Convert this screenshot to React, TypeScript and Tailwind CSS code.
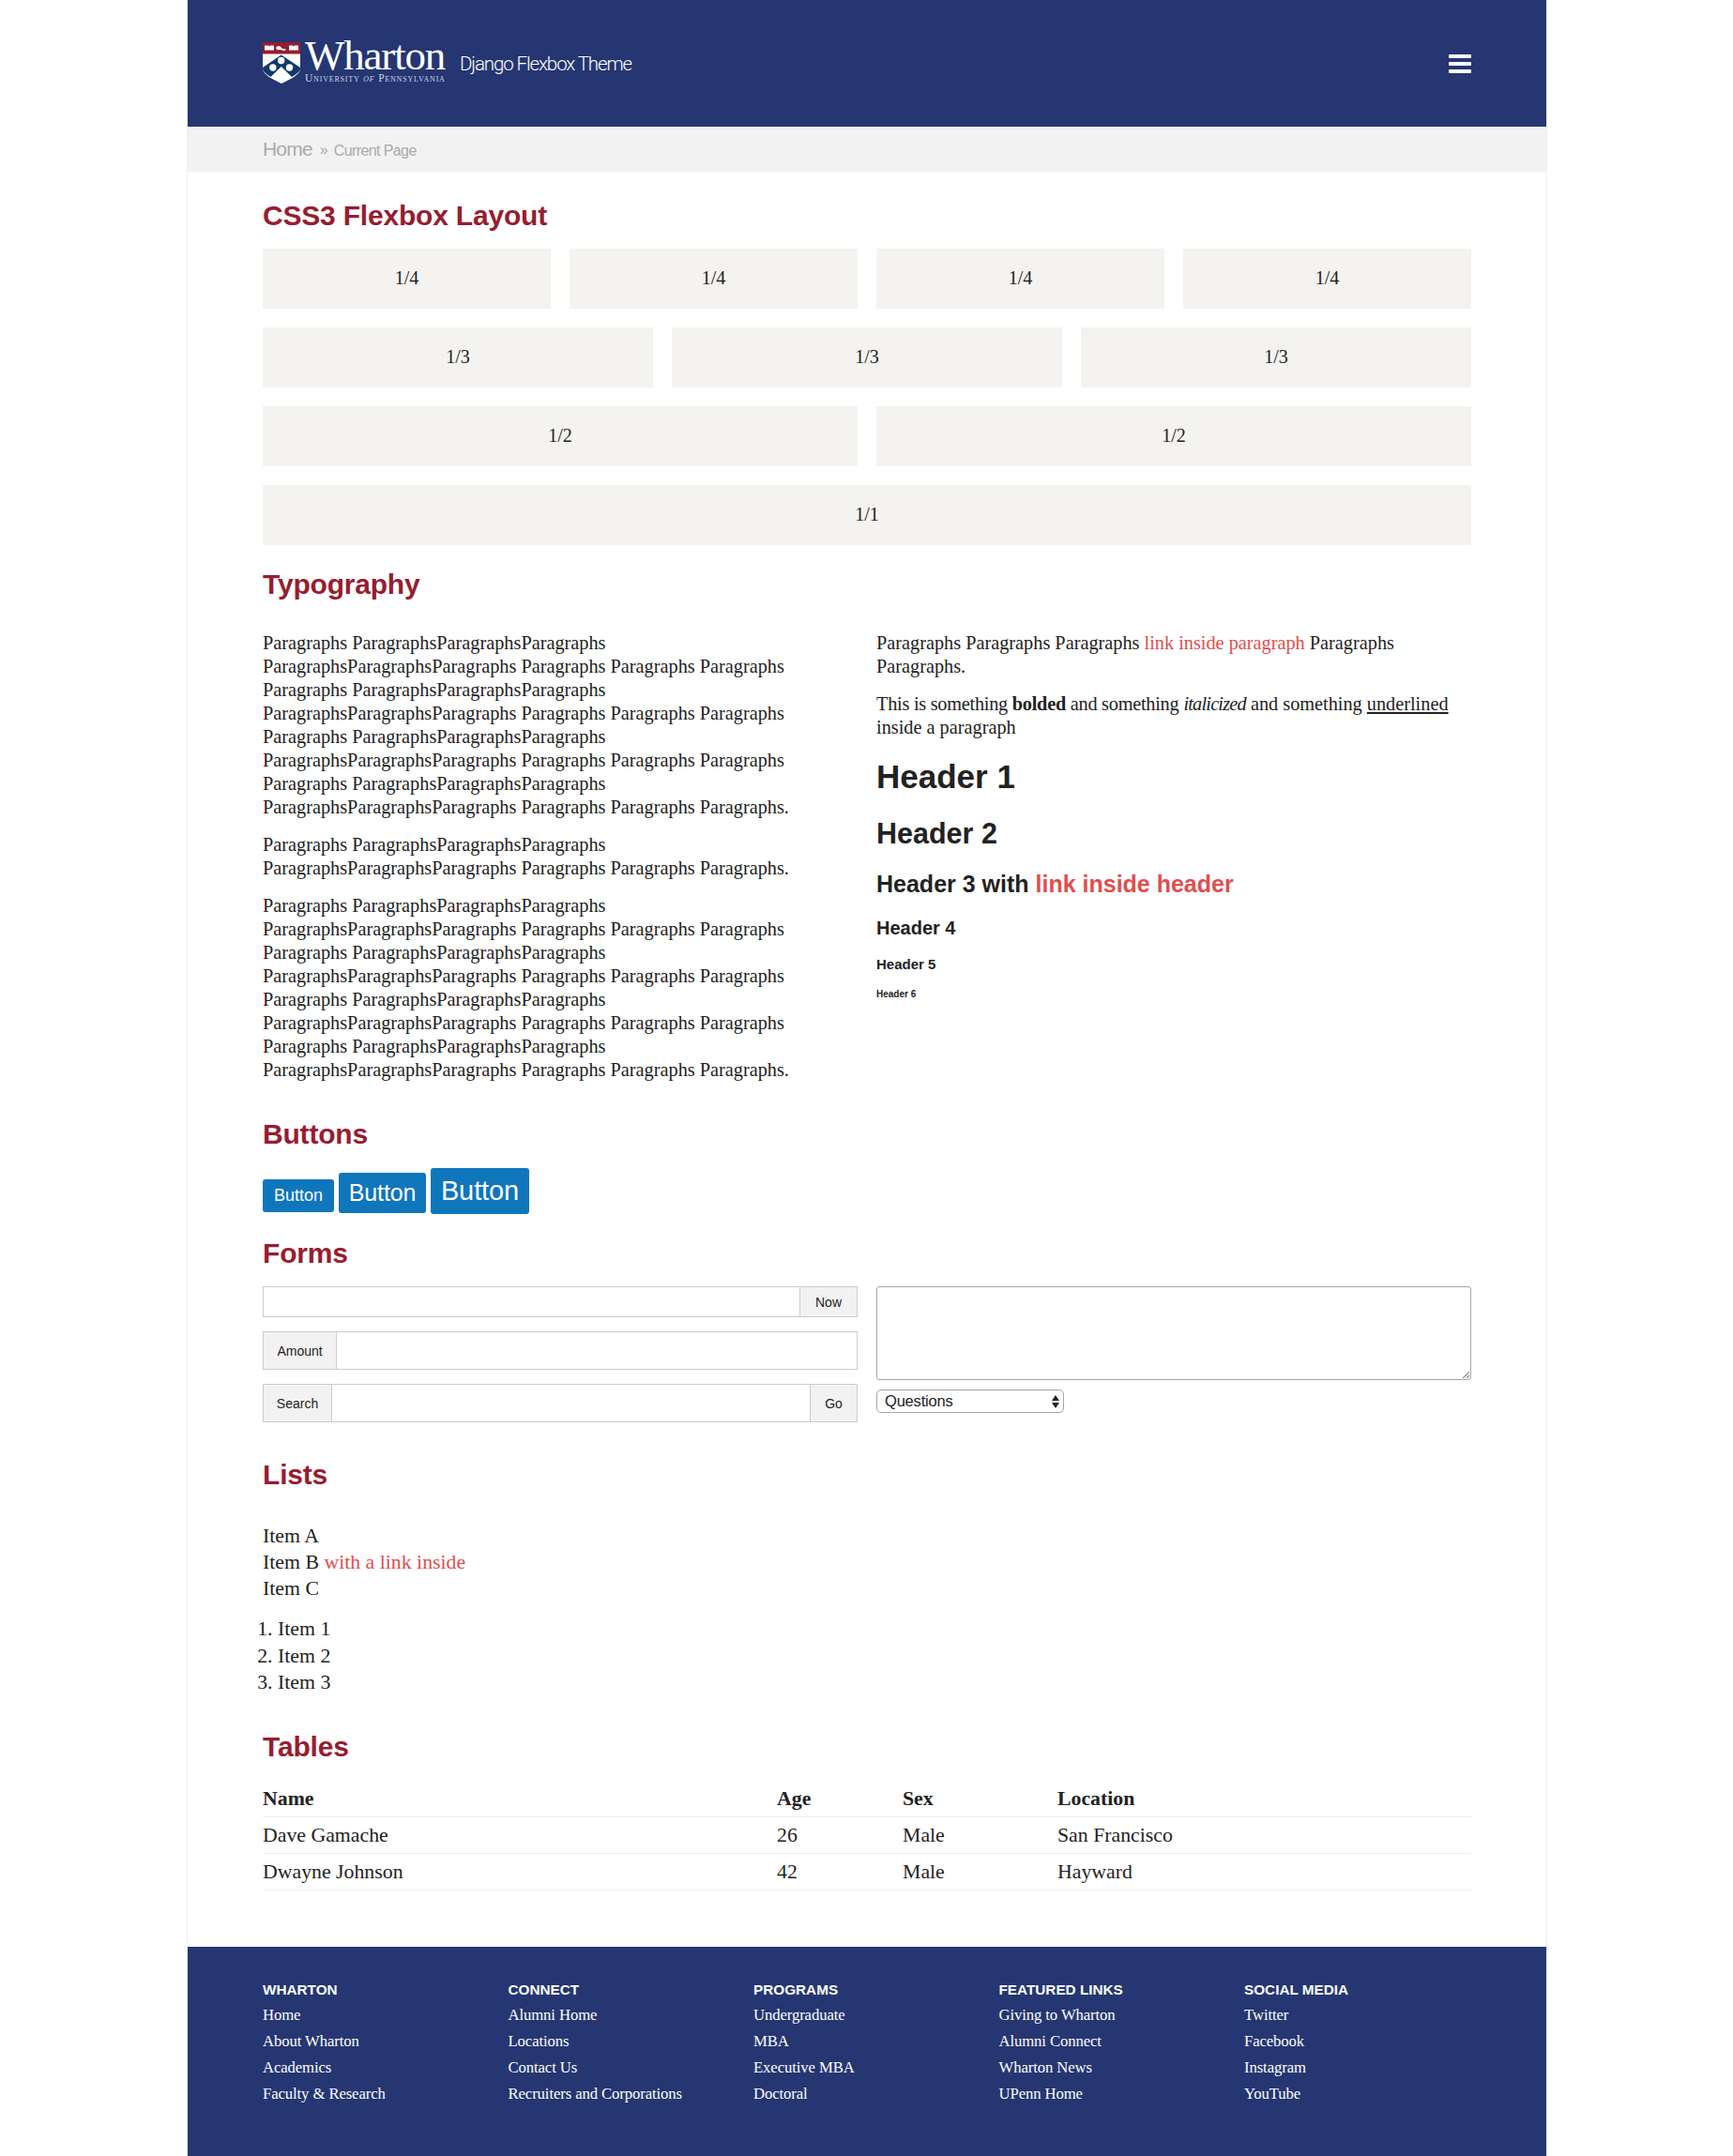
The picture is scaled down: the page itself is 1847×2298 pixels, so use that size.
const serif = "font-['Liberation_Serif',serif]";

function Shield() {
  return (
    <svg width="40" height="44" viewBox="0 0 40 44" className="shrink-0 mt-[-2px]">
      <path d="M0 0H40V28C40 35 28 40 20 44C12 40 0 35 0 28Z" fill="#fff" />
      <rect x="0" y="0" width="40" height="12.500" fill="#961d31" />
      <path d="M2 3.500h4l1 1 1-1h4v5H2Z M28 3.500h4l1 1 1-1h4v5H28Z M14 6c2-3 5-2 6 0s3 0 5 2c-3 2-4 0-6 0s-4 1-5-2Z" fill="#fff" />
      <path d="M19.700 13.500L40 27V28C40 30 38 33 31 37L19.700 26L8.500 37C2 33 0 30 0 28V27Z" fill="#0f3a6b" />
      <circle cx="19.700" cy="19.500" r="3.700" fill="#fff" />
      <circle cx="10.800" cy="27" r="3.700" fill="#fff" />
      <circle cx="28.500" cy="27" r="3.700" fill="#fff" />
    </svg>
  );
}

function Box({ label, className }: { label: string; className: string }) {
  return (
    <div className={`${className} h-16 pb-[3px] bg-[#f4f3ef] flex items-center justify-center text-[20px] text-[#222]`}>
      {label}
    </div>
  );
}

function H2({ children, className = "" }: { children: React.ReactNode; className?: string }) {
  return (
    <h2 className={`font-['Liberation_Sans',sans-serif] font-bold text-[30px] leading-[36px] tracking-[-0.2px] text-[#961d31] ${className}`}>
      {children}
    </h2>
  );
}

const P1 = "Paragraphs ParagraphsParagraphsParagraphs";
const P2 = "ParagraphsParagraphsParagraphs Paragraphs Paragraphs Paragraphs";

function LongPara({ className = "" }: { className?: string }) {
  return (
    <p className={className}>
      {P1}<br />{P2}<br />{P1}<br />{P2}<br />{P1}<br />{P2}<br />{P1}<br />{P2}.
    </p>
  );
}

const footer = [
  { t: "WHARTON", l: ["Home", "About Wharton", "Academics", "Faculty & Research"] },
  { t: "CONNECT", l: ["Alumni Home", "Locations", "Contact Us", "Recruiters and Corporations"] },
  { t: "PROGRAMS", l: ["Undergraduate", "MBA", "Executive MBA", "Doctoral"] },
  { t: "FEATURED LINKS", l: ["Giving to Wharton", "Alumni Connect", "Wharton News", "UPenn Home"] },
  { t: "SOCIAL MEDIA", l: ["Twitter", "Facebook", "Instagram", "YouTube"] },
];

export default function App() {
  return (
    <div className={`${serif} ml-[199px] w-[1450px] h-[2298px] border-x border-[#eeeeee] bg-white text-[#222] flex flex-col`}>
      <header className="h-[135px] bg-[#253672] px-20 flex items-center justify-between text-white">
        <div className="flex items-center">
          <Shield />
          <div className="ml-[5px] flex flex-col w-[152px] mt-[-1px]">
            <span className="font-['Liberation_Serif',serif] text-[45px] leading-[36px] tracking-[-1.2px] mt-[-4px]">Wharton</span>
            <span className="font-['Liberation_Serif',serif] text-[11.500px] leading-[12px] tracking-[0.8px] text-[#cfd4e4] whitespace-nowrap [font-variant:small-caps]">
              University <i>of</i> Pennsylvania
            </span>
          </div>
          <span className="ml-[13px] mt-[2px] font-['Roboto',sans-serif] font-light text-[20.500px] tracking-[-1.100px]">Django Flexbox Theme</span>
        </div>
        <div className="flex flex-col gap-[4px] w-6">
          <span className="h-1 bg-white rounded-[1px]" />
          <span className="h-1 bg-white rounded-[1px]" />
          <span className="h-1 bg-white rounded-[1px]" />
        </div>
      </header>

      <nav className="h-12 bg-[#f2f2f2] px-20 flex items-center font-['Liberation_Sans',sans-serif] text-[#aaaaaa]">
        <span className="text-[21px] tracking-[-0.8px]">Home</span>
        <span className="ml-[8px] text-[16px] mt-[2px]">»</span>
        <span className="ml-[6px] text-[16px] mt-[3px] tracking-[-0.6px]">Current Page</span>
      </nav>

      <main className="px-20 flex-1">
        <H2 className="mt-[29px]">CSS3 Flexbox Layout</H2>
        <div className="mt-[17px] flex flex-col gap-5">
          <div className="flex gap-5">
            {[0, 1, 2, 3].map((i) => <Box key={i} label="1/4" className="flex-1" />)}
          </div>
          <div className="flex gap-5">
            {[0, 1, 2].map((i) => <Box key={i} label="1/3" className="flex-1" />)}
          </div>
          <div className="flex gap-5">
            {[0, 1].map((i) => <Box key={i} label="1/2" className="flex-1" />)}
          </div>
          <Box label="1/1" className="w-full" />
        </div>

        <H2 className="mt-6">Typography</H2>
        <div className="mt-[32px] grid grid-cols-2 gap-5 text-[20.300px] leading-[25px] text-[#222]">
          <div className="whitespace-nowrap">
            <LongPara />
            <p className="mt-[15px]">{P1}<br />{P2}.</p>
            <LongPara className="mt-[15px]" />
          </div>
          <div>
            <p>
              Paragraphs Paragraphs Paragraphs <a className="text-[#e04e4e]">link inside paragraph</a> Paragraphs<br />Paragraphs.
            </p>
            <p className="mt-[15px]">
              <span className="tracking-[-0.25px]">This is something <b>bolded</b> and something</span> <i className="tracking-[-0.8px]">italicized</i> and something <u>underlined</u><br />inside a paragraph
            </p>
            <div className="font-['Liberation_Sans',sans-serif] font-bold text-[#222]">
              <h1 className="mt-[18px] text-[35px] leading-[44px]">Header 1</h1>
              <h2 className="mt-[20px] text-[30.500px] leading-[36px]">Header 2</h2>
              <h3 className="mt-[21px] text-[25px] leading-[30px]">
                Header 3 with <a className="text-[#e04e4e]">link inside header</a>
              </h3>
              <h4 className="mt-[20px] text-[20px] leading-[24px]">Header 4</h4>
              <h5 className="mt-[18px] text-[15px] leading-[18px]">Header 5</h5>
              <h6 className="mt-[17px] text-[10px] leading-[12px]">Header 6</h6>
            </div>
          </div>
        </div>

        <H2 className="mt-[38px]">Buttons</H2>
        <div className="mt-[17px] flex items-end gap-[5px] font-['Liberation_Sans',sans-serif] text-white h-[50px]">
          <button className="w-[76px] h-[35px] mb-[2px] bg-[#0f76bc] rounded-[3px] text-[18px]">Button</button>
          <button className="w-[93px] h-[43px] mb-[1px] bg-[#0f76bc] rounded-[3px] text-[25px] tracking-[-0.1px]">Button</button>
          <button className="w-[105px] h-[49px] mb-0 bg-[#0f76bc] rounded-[3px] text-[29px] tracking-[-0.1px]">Button</button>
        </div>

        <H2 className="mt-[24px]">Forms</H2>
        <div className="mt-[17px] grid grid-cols-2 gap-5 font-['Liberation_Sans',sans-serif] text-[14px] text-[#222]">
          <div className="flex flex-col gap-[15px]">
            <div className="h-[33px] flex border border-[#cccccc]">
              <div className="flex-1 bg-white" />
              <div className="w-[61px] pt-[1px] bg-[#f2f2f2] border-l border-[#cccccc] flex items-center justify-center">Now</div>
            </div>
            <div className="h-[41px] flex border border-[#cccccc]">
              <div className="w-[78px] pt-[1px] bg-[#f2f2f2] border-r border-[#cccccc] flex items-center justify-center">Amount</div>
              <div className="flex-1 bg-white" />
            </div>
            <div className="h-[41px] flex border border-[#cccccc]">
              <div className="w-[73px] pt-[1px] bg-[#f2f2f2] border-r border-[#cccccc] flex items-center justify-center">Search</div>
              <div className="flex-1 bg-white" />
              <div className="w-[50px] pt-[1px] bg-[#f2f2f2] border-l border-[#cccccc] flex items-center justify-center">Go</div>
            </div>
          </div>
          <div>
            <textarea className="block w-full h-[100px] border border-[#a6a6a6] rounded-[3px] bg-white" />
            <div className="mt-[10px] w-[200px] h-[25px] border border-[#a6a6a6] rounded-[5px] flex items-center justify-between pl-2 pr-[4px] text-[16.500px] tracking-[-0.2px]">
              <span>Questions</span>
              <svg width="8" height="14" viewBox="0 0 8 14"><path d="M4 0L8 6H0Z M0 8H8L4 14Z" fill="#222" /></svg>
            </div>
          </div>
        </div>

        <H2 className="mt-[38px]">Lists</H2>
        <ul className="mt-[33px] text-[21.800px] leading-[28px]">
          <li>Item A</li>
          <li>Item B <a className="text-[#e04e4e]">with a link inside</a></li>
          <li>Item C</li>
        </ul>
        <ol className="mt-[15px] ml-[16px] text-[21.800px] leading-[28.500px] list-decimal pl-0">
          <li>Item 1</li>
          <li>Item 2</li>
          <li>Item 3</li>
        </ol>

        <H2 className="mt-[36px]">Tables</H2>
        <table className="mt-[19px] w-full text-[21.800px] table-fixed">
          <colgroup>
            <col className="w-[548px]" />
            <col className="w-[134px]" />
            <col className="w-[165px]" />
            <col />
          </colgroup>
          <thead>
            <tr className="h-[38px] border-b border-[#eeeeee] text-left">
              <th className="font-bold">Name</th><th className="font-bold">Age</th><th className="font-bold">Sex</th><th className="font-bold">Location</th>
            </tr>
          </thead>
          <tbody>
            <tr className="h-[39px] border-b border-[#eeeeee]"><td>Dave Gamache</td><td>26</td><td>Male</td><td>San Francisco</td></tr>
            <tr className="h-[39px] border-b border-[#eeeeee]"><td>Dwayne Johnson</td><td>42</td><td>Male</td><td>Hayward</td></tr>
          </tbody>
        </table>
      </main>

      <footer className="h-[223px] bg-[#253672] px-20 pt-[36px] grid grid-cols-[repeat(5,261.5px)] text-white">
        {footer.map((c) => (
          <div key={c.t}>
            <div className="font-['Liberation_Sans',sans-serif] font-bold text-[15.300px] leading-[20px]">{c.t}</div>
            <ul className="mt-[3px] text-[16.700px] leading-[28px] tracking-[-0.1px]">
              {c.l.map((x) => <li key={x}>{x}</li>)}
            </ul>
          </div>
        ))}
      </footer>
    </div>
  );
}
